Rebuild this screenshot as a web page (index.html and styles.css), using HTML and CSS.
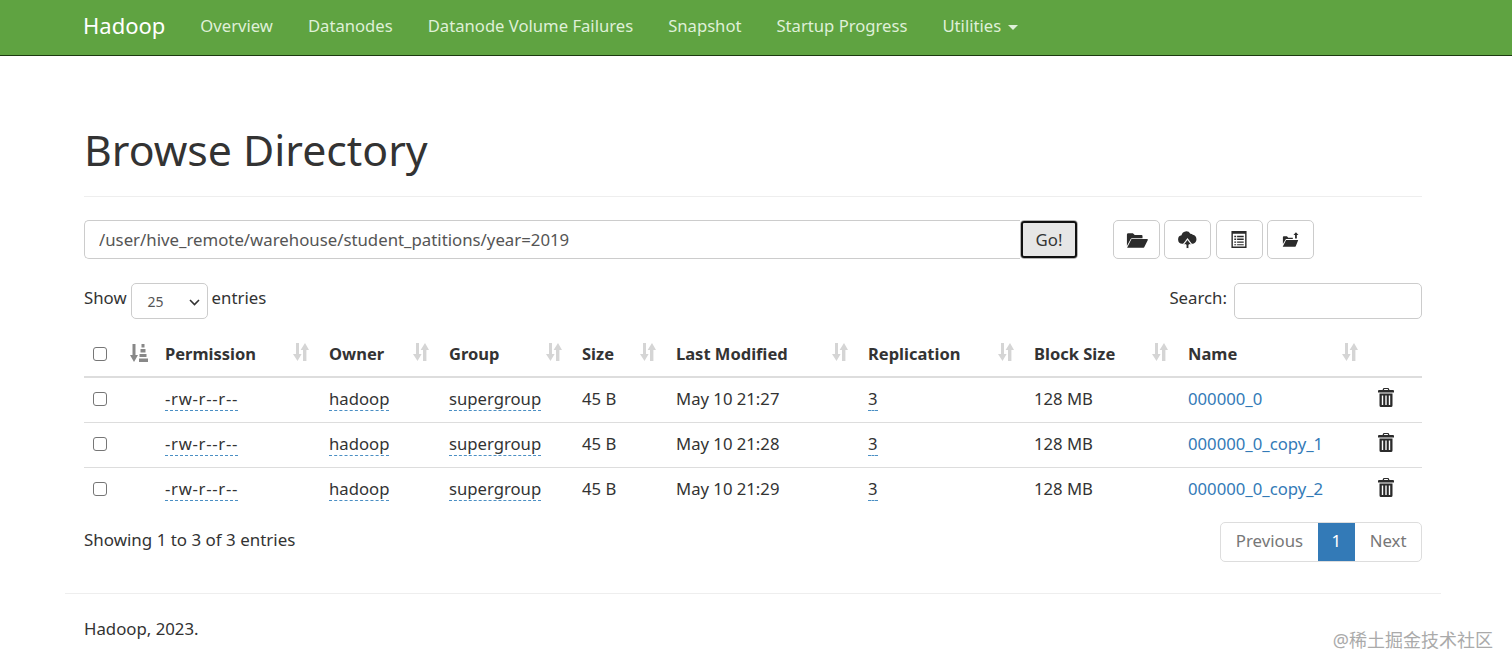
FILE: index.html
```html
<!DOCTYPE html>
<html lang="en">
<head>
    <meta charset="UTF-8">
    <title>Browsing HDFS</title>
    <link rel="stylesheet" href="styles.css">
</head>
<body>
    <svg class="defs" width="0" height="0">
        <symbol id="sort" viewBox="0 0 16 18">
            <path d="M3 0h3v11h2.600L4.500 18 0 11h3z"/>
            <path d="M10 18V7H7.600L12 0l4 7h-2.600v11z"/>
        </symbol>
        <symbol id="sort-active" viewBox="0 0 18 18">
            <path d="M2.500 0h3v11h2.500l-4 7L0 11h2.500z"/>
            <path class="bars" d="M11.500 0h3v3.500h-3zM10.500 5h5v3.500h-5zM9.500 10h7v3h-7zM9 14.500h9V18H9z"/>
        </symbol>
        <symbol id="trash" viewBox="0 0 16 19">
            <path d="M5.500 0h5l1 2H15a1 1 0 0 1 1 1v1.500H0V3a1 1 0 0 1 1-1h3.500zM6.300 1.100L5.900 2h4.200l-.4-.9z" fill-rule="evenodd"/>
            <path d="M1.500 5.500h13v12a1.500 1.500 0 0 1-1.500 1.500H3a1.500 1.500 0 0 1-1.500-1.500zM3.800 7.500v9.500h1.400V7.500zm3.500 0v9.500h1.400V7.500zm3.500 0v9.500h1.400V7.500z" fill-rule="evenodd"/>
        </symbol>
    </svg>

    <nav class="navbar">
        <div class="container navbar-inner">
            <a class="brand" href="#">Hadoop</a>
            <ul class="nav">
                <li><a href="#">Overview</a></li>
                <li><a href="#">Datanodes</a></li>
                <li><a href="#">Datanode Volume Failures</a></li>
                <li><a href="#">Snapshot</a></li>
                <li><a href="#">Startup Progress</a></li>
                <li><a href="#">Utilities <span class="caret"></span></a></li>
            </ul>
        </div>
    </nav>

    <div class="container">
        <div class="page-header">
            <h1>Browse Directory</h1>
        </div>

        <div class="toolbar">
            <div class="path-group">
                <input class="path-input" type="text" value="/user/hive_remote/warehouse/student_patitions/year=2019">
                <button class="go-btn">Go!</button>
            </div>
            <div class="icon-btns">
                <button class="icon-btn">
                    <svg width="22" height="16" viewBox="0 0 24 17"><path d="M1 15V2.500A1.500 1.500 0 0 1 2.500 1h5L9.500 3H17a1 1 0 0 1 1 1v2.500H6.500a1.500 1.500 0 0 0-1.400 1z"/><path d="M6 7.500h17a.8.8 0 0 1 .8 1L20 16.200a1 1 0 0 1-1 .8H1.200z"/></svg>
                </button>
                <button class="icon-btn">
                    <svg width="19" height="19" viewBox="0 0 20 19"><path d="M5.500 14H4.500a4.500 4.500 0 0 1-.8-8.900A5 5 0 0 1 13 3.500a3.800 3.800 0 0 1 2.600.9 5 5 0 0 1 .4 9.600h-1.500l-4.500-6z"/><path class="cut" d="M10 9.500l4.500 5.500h-3v4h-3v-4h-3z"/></svg>
                </button>
                <button class="icon-btn">
                    <svg width="16" height="17" viewBox="0 0 16 18"><path fill-rule="evenodd" d="M0 0h16v18H0zM1.500 3v13.500h13V3zM3 5h2v1.500H3zM6 5h7v1.500H6zM3 8h2v1.500H3zM6 8h7v1.500H6zM3 11h2v1.500H3zM6 11h7v1.500H6zM3 14h2v1H3zM6 14h7v1H6z"/></svg>
                </button>
                <button class="icon-btn">
                    <svg width="18" height="15" viewBox="0 0 20 16"><path d="M1 13V5.500A1 1 0 0 1 2 4.500h3.500L7 6h5v1.500H4.800A1 1 0 0 0 4 8z"/><path d="M4.500 8.500H18l-2.600 6.700a1 1 0 0 1-.9.800H0.800z"/><path d="M15.500 0l2.800 3h-1.800v4h-2V3h-1.800z"/></svg>
                </button>
            </div>
        </div>

        <div class="table-controls">
            <label class="length">Show
                <span class="select-box">25
                    <svg width="11" height="7" viewBox="0 0 11 7"><path d="M1 1l4.500 4.500L10 1" fill="none" stroke="#333" stroke-width="1.600"/></svg>
                </span>
                entries</label>
            <label class="search">Search: <input class="search-input" type="text"></label>
        </div>

        <table class="files">
            <thead>
                <tr>
                    <th class="col-check"><span class="checkbox"></span></th>
                    <th class="col-sort"><svg class="sort-active"><use href="#sort-active"/></svg></th>
                    <th class="col-perm">Permission<svg class="sort"><use href="#sort"/></svg></th>
                    <th class="col-owner">Owner<svg class="sort"><use href="#sort"/></svg></th>
                    <th class="col-group">Group<svg class="sort"><use href="#sort"/></svg></th>
                    <th class="col-size">Size<svg class="sort"><use href="#sort"/></svg></th>
                    <th class="col-date">Last Modified<svg class="sort"><use href="#sort"/></svg></th>
                    <th class="col-rep">Replication<svg class="sort"><use href="#sort"/></svg></th>
                    <th class="col-block">Block Size<svg class="sort"><use href="#sort"/></svg></th>
                    <th class="col-name">Name<svg class="sort"><use href="#sort"/></svg></th>
                    <th class="col-del"></th>
                </tr>
            </thead>
            <tbody>
                <tr>
                    <td><span class="checkbox"></span></td>
                    <td></td>
                    <td><span class="dotted perm">-rw-r--r--</span></td>
                    <td><span class="dotted">hadoop</span></td>
                    <td><span class="dotted">supergroup</span></td>
                    <td>45 B</td>
                    <td>May 10 21:27</td>
                    <td><span class="dotted">3</span></td>
                    <td>128 MB</td>
                    <td><a href="#">000000_0</a></td>
                    <td><svg class="trash"><use href="#trash"/></svg></td>
                </tr>
                <tr>
                    <td><span class="checkbox"></span></td>
                    <td></td>
                    <td><span class="dotted perm">-rw-r--r--</span></td>
                    <td><span class="dotted">hadoop</span></td>
                    <td><span class="dotted">supergroup</span></td>
                    <td>45 B</td>
                    <td>May 10 21:28</td>
                    <td><span class="dotted">3</span></td>
                    <td>128 MB</td>
                    <td><a href="#">000000_0_copy_1</a></td>
                    <td><svg class="trash"><use href="#trash"/></svg></td>
                </tr>
                <tr>
                    <td><span class="checkbox"></span></td>
                    <td></td>
                    <td><span class="dotted perm">-rw-r--r--</span></td>
                    <td><span class="dotted">hadoop</span></td>
                    <td><span class="dotted">supergroup</span></td>
                    <td>45 B</td>
                    <td>May 10 21:29</td>
                    <td><span class="dotted">3</span></td>
                    <td>128 MB</td>
                    <td><a href="#">000000_0_copy_2</a></td>
                    <td><svg class="trash"><use href="#trash"/></svg></td>
                </tr>
            </tbody>
        </table>

        <div class="table-footer">
            <div class="info">Showing 1 to 3 of 3 entries</div>
            <ul class="pagination">
                <li>Previous</li>
                <li class="active">1</li>
                <li>Next</li>
            </ul>
        </div>

        <hr class="footer-rule">
        <p class="copyright">Hadoop, 2023.</p>
    </div>

    <div class="watermark">@稀土掘金技术社区</div>
</body>
</html>
```

FILE: styles.css
```css
* {
    box-sizing: border-box;
}

body {
    margin: 0;
    background: white;
    color: #333;
    font-family: "Noto Sans", "Noto Sans CJK SC", sans-serif;
    font-size: 16.8px;
    line-height: 1.4;
    overflow: hidden;
}

a {
    text-decoration: none;
}

.defs {
    position: absolute;
}

.container {
    width: 1338px;
    margin-left: 84px;
}

.navbar {
    height: 56px;
    background: #5fa341;
    border-bottom: 1px solid #1c3a10;
}

.navbar-inner {
    display: flex;
    align-items: center;
    height: 55px;
    padding-bottom: 4px;
}

.brand {
    color: white;
    font-size: 22px;
    margin-left: -1px;
    margin-right: 35px;
}

.nav {
    display: flex;
    gap: 35px;
    list-style: none;
    margin: 0;
    padding: 0;
    font-size: 16.65px;
}

.nav a {
    color: #dff0d8;
}

.caret {
    display: inline-block;
    margin-left: 2px;
    vertical-align: middle;
    border-top: 5px solid #dff0d8;
    border-left: 5px solid transparent;
    border-right: 5px solid transparent;
}

.page-header {
    height: 141px;
    padding-top: 68px;
    border-bottom: 1px solid #eee;
}

h1 {
    margin: 0;
    font-size: 42.8px;
    font-weight: 400;
    line-height: 1.2;
}

.toolbar {
    display: flex;
    margin-top: 23px;
}

.path-group {
    display: flex;
    width: 994px;
    height: 39px;
}

.path-input {
    flex: 1;
    min-width: 0;
    padding: 0 14px;
    border: 1px solid #ccc;
    border-right: none;
    border-radius: 5px 0 0 5px;
    color: #555;
    font: inherit;
}

.go-btn {
    width: 58px;
    background: #e6e6e6;
    border: 1px solid #b5b5b5;
    border-radius: 4px;
    outline: 2px solid #111;
    outline-offset: -3px;
    color: #333;
    font: inherit;
}

.icon-btns {
    display: flex;
    gap: 4.400px;
    margin-left: 35px;
}

.icon-btn {
    display: flex;
    align-items: center;
    justify-content: center;
    width: 47px;
    height: 39px;
    padding: 0;
    background: white;
    border: 1px solid #ccc;
    border-radius: 5px;
}

.icon-btn svg {
    fill: #2b2b2b;
}

.icon-btn .cut {
    stroke: white;
    stroke-width: 1;
}

.table-controls {
    display: flex;
    justify-content: space-between;
    align-items: flex-start;
    margin-top: 24px;
    height: 36px;
    line-height: 30px;
}

.length {
    display: flex;
    align-items: flex-start;
    gap: 4px;
}

.select-box {
    display: flex;
    align-items: center;
    justify-content: space-between;
    width: 77px;
    height: 36px;
    padding: 2px 7px 0 16px;
    border: 1px solid #ccc;
    border-radius: 5px;
    color: #555;
    font-size: 14px;
}

.search {
    display: flex;
    align-items: flex-start;
    gap: 7px;
}

.search-input {
    width: 188px;
    height: 36px;
    border: 1px solid #ccc;
    border-radius: 5px;
}

.files {
    width: 1338px;
    margin-top: 14px;
    border-collapse: collapse;
    table-layout: fixed;
    font-size: 16.7px;
}

.files th {
    position: relative;
    height: 44px;
    padding: 0 9px 2px;
    border-bottom: 2px solid #ddd;
    text-align: left;
    font-size: 16.5px;
    font-weight: 700;
}

.files td {
    height: 45px;
    padding: 0 9px 2px;
    border-top: 1px solid #ddd;
}

.files tbody tr:first-child td {
    border-top: none;
}

.files a {
    color: #337ab7;
}

.col-check { width: 37px; }
.col-sort { width: 35px; }
.col-perm { width: 164px; }
.col-owner { width: 120px; }
.col-group { width: 133px; }
.col-size { width: 94px; }
.col-date { width: 192px; }
.col-rep { width: 166px; }
.col-block { width: 154px; }
.col-name { width: 190px; }
.col-del { width: 53px; }

.checkbox {
    display: block;
    width: 14px;
    height: 14px;
    border: 1px solid #767676;
    border-radius: 3px;
}

.sort {
    position: absolute;
    right: 11px;
    top: 10px;
    width: 16px;
    height: 18px;
    fill: #d5d5d5;
}

.sort-active {
    display: block;
    margin-top: -2px;
    width: 18px;
    height: 18px;
    fill: #888;
}

.trash {
    display: block;
    margin-bottom: 3px;
    width: 16px;
    height: 19px;
    fill: #2b2b2b;
}

.dotted {
    border-bottom: 1px dashed #4a8fc4;
}

.perm {
    letter-spacing: 0.7px;
}

.table-footer {
    display: flex;
    justify-content: space-between;
    align-items: flex-start;
    margin-top: 10px;
}

.info {
    margin-top: 6px;
    font-size: 16.95px;
}

.pagination {
    display: flex;
    height: 40px;
    margin: 0;
    padding: 0;
    list-style: none;
    border: 1px solid #ddd;
    border-radius: 5px;
    color: #777;
    overflow: hidden;
}

.pagination li {
    display: flex;
    align-items: center;
    padding: 0 14.500px 2px;
}

.pagination .active {
    padding: 0 14px 2px;
    background: #337ab7;
    color: white;
}

.footer-rule {
    margin: 31px -19px 0;
    border: none;
    border-top: 1px solid #eee;
}

.copyright {
    margin: 23px 0 0;
}

.watermark {
    position: absolute;
    right: 19px;
    top: 629px;
    color: #aaa;
    font-size: 18px;
    line-height: 1.3;
}
```
